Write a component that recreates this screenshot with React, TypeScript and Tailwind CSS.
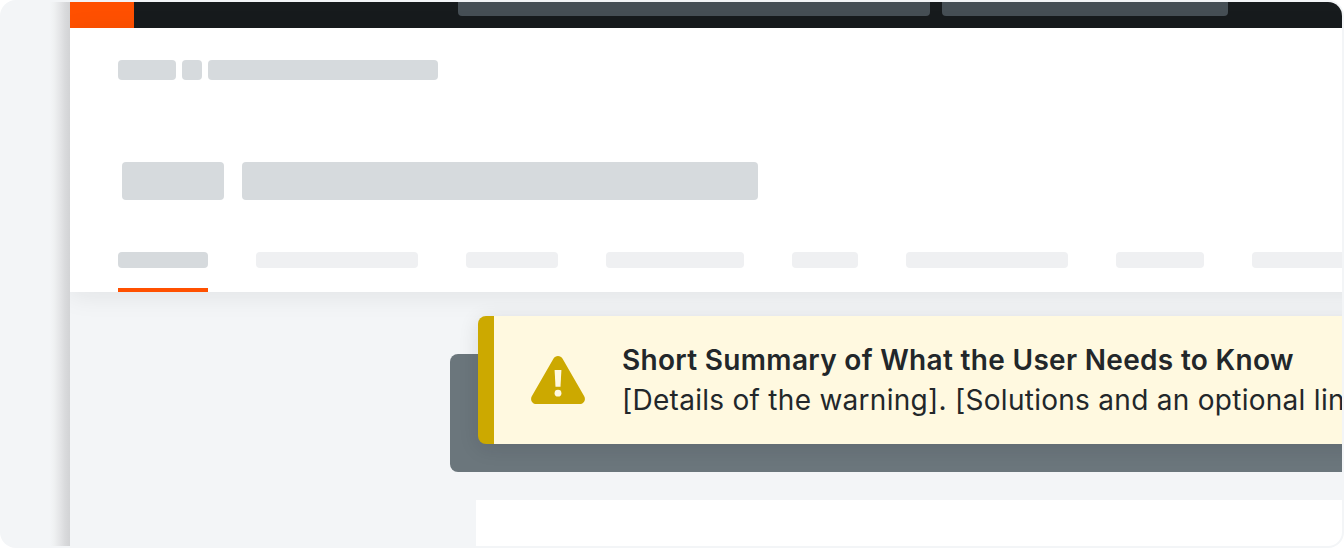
import clsx from "clsx";

const TABS = [
  { id: "overview", width: "w-[90px]" },
  { id: "details", width: "w-[162px]" },
  { id: "events", width: "w-[92px]" },
  { id: "resources", width: "w-[138px]" },
  { id: "logs", width: "w-[66px]" },
  { id: "permissions", width: "w-[162px]" },
  { id: "usage", width: "w-[88px]" },
  { id: "settings", width: "w-[162px]" },
];

function Placeholder({ className }: { className: string }) {
  return <div className={clsx("shrink-0 rounded bg-[#d6dadd]", className)} />;
}

function WarningIcon() {
  return (
    <svg width="54" height="48" viewBox="0 0 54 48" className="shrink-0">
      <path
        d="M22.4 2.7 C24.4 -0.9 29.6 -0.9 31.6 2.7 L53.2 40.3 C55.2 43.8 52.7 48 48.7 48 H5.3 C1.3 48 -1.2 43.8 0.8 40.3 Z"
        fill="#cca900"
      />
      <path d="M23.6 14 H30.4 L29.5 30.8 H24.5 Z" fill="#fff9e0" />
      <circle cx="27" cy="37.2" r="3.4" fill="#fff9e0" />
    </svg>
  );
}

function TopBar() {
  return (
    <div className="flex h-[26px] shrink-0 items-start bg-[#171b1d]">
      <div className="h-full w-16 shrink-0 bg-[#ff5000]" />
      <div className="ml-[324px] flex gap-3">
        <div className="h-3.5 w-[472px] rounded-b bg-[#464f55]" />
        <div className="h-3.5 w-[286px] rounded-b bg-[#464f55]" />
      </div>
    </div>
  );
}

function PageHeader() {
  return (
    <header className="relative -mr-10 flex h-[264px] shrink-0 flex-col bg-white pl-12 shadow-[0_4px_24px_rgba(23,27,29,0.08)]">
      {/* Breadcrumbs */}
      <div className="mt-8 flex gap-1.5">
        <Placeholder className="h-5 w-[58px]" />
        <Placeholder className="h-5 w-5" />
        <Placeholder className="h-5 w-[230px]" />
      </div>

      {/* Title */}
      <div className="mt-[82px] ml-1 flex gap-[18px]">
        <Placeholder className="h-[38px] w-[102px]" />
        <Placeholder className="h-[38px] w-[516px]" />
      </div>

      {/* Tabs */}
      <div className="mt-auto flex gap-12">
        {TABS.map((tab, i) => (
          <div
            key={tab.id}
            className={clsx("h-10 shrink-0 border-b-4", tab.width, i === 0 ? "border-[#ff5000]" : "border-transparent")}
          >
            <div className={clsx("h-4 rounded", i === 0 ? "bg-[#d6dadd]" : "bg-[#eff0f2]")} />
          </div>
        ))}
      </div>
    </header>
  );
}

function WarningBanner() {
  return (
    <div className="relative -mt-[38px] ml-7 flex h-32 flex-1 items-center rounded-l-lg border-l-16 border-[#cca900] bg-[#fff9e0] pl-[37px] shadow-[0_4px_20px_rgba(23,27,29,0.12)]">
      <WarningIcon />
      <div className="ml-[37px] text-[28px] leading-10 whitespace-nowrap text-[#22272a]">
        <p className="font-semibold tracking-[0.0112em]">Short Summary of What the User Needs to Know</p>
        <p className="tracking-[0.01em]">[Details of the warning]. [Solutions and an optional link]</p>
      </div>
    </div>
  );
}

export default function App() {
  return (
    <div className="h-[548px] w-[1344px] overflow-hidden rounded-2xl bg-[#f3f5f7] p-0.5 font-['Inter',sans-serif]">
      <div className="flex h-full overflow-hidden rounded-[14px]">
        {/* Side rail, shaded where the page sits over it */}
        <div className="flex w-[68px] shrink-0 justify-end">
          <div className="w-5 bg-[linear-gradient(to_right,#f3f5f7_0%,#eff1f2_20%,#e4e5e7_50%,#d9dadc_75%,#d2d3d5_100%)]" />
        </div>
        <main className="flex min-w-0 flex-1 flex-col overflow-hidden bg-[#f3f5f7]">
          <TopBar />
          <PageHeader />
          <section className="relative -mr-10 mt-[62px] ml-[380px] flex h-[118px] shrink-0 items-start rounded-l-lg bg-[#6b767c]">
            <WarningBanner />
          </section>
          <div className="mt-7 ml-[406px] flex-1 bg-white" />
        </main>
      </div>
    </div>
  );
}
